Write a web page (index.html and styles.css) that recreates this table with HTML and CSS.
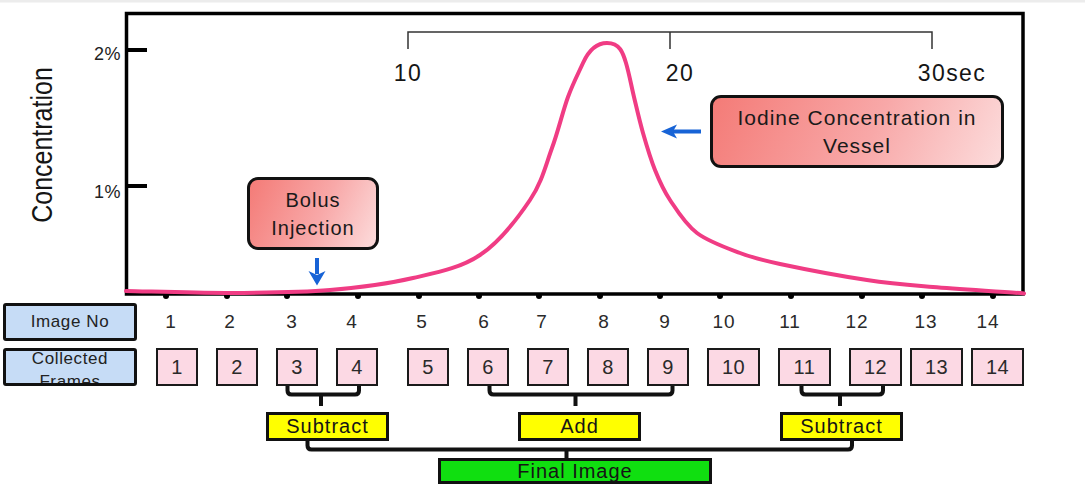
FILE: index.html
```html
<!DOCTYPE html>
<html lang="en">
<head>
<meta charset="utf-8">
<title>Contrast bolus timing</title>
<link rel="stylesheet" href="styles.css">
</head>
<body>
<div class="page">
  <div class="chart">
    <svg class="plot" width="1085" height="303" viewBox="0 0 1085 303">
      <rect class="topband" x="0" y="0" width="1085" height="2.5"/>
      <path class="timebar" d="M408,49 V32 H932 V49 M670,32 V49"/>
      <rect class="frame-box" x="126.5" y="13.5" width="896.5" height="280.5"/>
      <path class="ytickline" d="M128,50 H147 M128,186 H147"/>
      <g class="dots">
        <circle cx="166" cy="296" r="3"/>
        <circle cx="227" cy="296" r="3"/>
        <circle cx="287" cy="296" r="3"/>
        <circle cx="358" cy="296" r="3"/>
        <circle cx="419" cy="296" r="3"/>
        <circle cx="479" cy="296" r="3"/>
        <circle cx="539" cy="296" r="3"/>
        <circle cx="600" cy="296" r="3"/>
        <circle cx="660" cy="296" r="3"/>
        <circle cx="720" cy="296" r="3"/>
        <circle cx="791" cy="296" r="3"/>
        <circle cx="862" cy="296" r="3"/>
        <circle cx="922" cy="296" r="3"/>
        <circle cx="993" cy="296" r="3"/>
      </g>
      <path class="curve" d="M126,291 C145,291.3 196.3,293.2 230,293 C263.7,292.8 299.5,292.5 330,290 C360.5,287.5 388,283.8 413,278 C438,272.2 460.5,268 480,255 C499.5,242 518,217.8 530,200 C542,182.2 545.7,165.2 552,148 C558.3,130.8 562.8,111.2 568,97 C573.2,82.8 578.5,73 583,63 C588,52 595,43 607,43 C620,43 623,53 626,63 C629,73 631.2,85.3 634,97 C636.8,108.7 639.5,120.8 643,133 C646.5,145.2 650.5,158.8 655,170 C659.5,181.2 663,189.5 670,200 C677,210.5 685.3,224.2 697,233 C708.7,241.8 726.2,247.8 740,253 C753.8,258.2 758.8,259.5 780,264 C801.2,268.5 841.5,276.2 867,280 C892.5,283.8 907.2,284.8 933,287 C958.8,289.2 1007.2,292 1024,293.5"/>
      <path class="arrow-shaft" d="M672,131.5 H701 M317,258 V274"/>
      <path class="arrow-head" d="M661,131.5 L677,124.5 L673,131.5 L677,138.5 Z M308.5,271 L317,285.5 L325.5,271 L317,275 Z"/>
    </svg>
    <div class="ylabel">Concentration</div>
    <div class="ytick p2">2%</div>
    <div class="ytick p1">1%</div>
    <div class="xtime x10">10</div>
    <div class="xtime x20">20</div>
    <div class="xtime x30">30sec</div>
    <div class="callout bolus">Bolus<br>Injection</div>
    <div class="callout iodine">Iodine Concentration in<br>Vessel</div>
  </div>

  <div class="row">
    <div class="label">Image No</div>
    <div class="nums">
      <span>1</span><span>2</span><span>3</span><span>4</span><span>5</span><span>6</span><span>7</span>
      <span>8</span><span>9</span><span>10</span><span>11</span><span>12</span><span>13</span><span>14</span>
    </div>
  </div>

  <div class="row row-frames">
    <div class="label two-line">Collected<br>Frames</div>
    <div class="frames">
      <div class="frame">1</div>
      <div class="frame">2</div>
      <div class="frame">3</div>
      <div class="frame">4</div>
      <div class="frame skip">5</div>
      <div class="frame">6</div>
      <div class="frame">7</div>
      <div class="frame">8</div>
      <div class="frame">9</div>
      <div class="frame wide">10</div>
      <div class="frame wide">11</div>
      <div class="frame wide">12</div>
      <div class="frame wide near">13</div>
      <div class="frame wide near">14</div>
    </div>
  </div>

  <svg class="links links-a" width="1085" height="26" viewBox="0 0 1085 26">
    <path d="M287.5,0 V4.5 Q287.5,8.5 291.5,8.5 H355 Q359,8.5 359,4.5 V0 M321,8.5 V20"/>
    <path d="M489.5,0 V4.5 Q489.5,8.5 493.5,8.5 H668.5 Q672.5,8.5 672.5,4.5 V0 M575.5,8.5 V20"/>
    <path d="M801.5,0 V4.5 Q801.5,8.5 805.5,8.5 H879 Q883,8.5 883,4.5 V0 M840,8.5 V20"/>
  </svg>

  <div class="ops">
    <div class="op">Subtract</div>
    <div class="op add">Add</div>
    <div class="op sub2">Subtract</div>
  </div>

  <svg class="links links-b" width="1085" height="17" viewBox="0 0 1085 17">
    <path d="M307.5,0 V4.5 Q307.5,8.5 311.5,8.5 H848 Q852,8.5 852,4.5 V0 M566.5,8.5 V17"/>
  </svg>

  <div class="final-row">
    <div class="final">Final Image</div>
  </div>
</div>
</body>
</html>
```

FILE: styles.css
```css
html, body {
  margin: 0;
  padding: 0;
  background: #ffffff;
}

body {
  width: 1085px;
  height: 487px;
  overflow: hidden;
  font-family: "Liberation Sans", Arial, sans-serif;
  color: #1c1c1c;
}

/* ---------- chart ---------- */
.chart {
  position: relative;
  height: 303px;
}

.plot {
  display: block;
}

.topband {
  fill: #ececec;
}

.timebar {
  fill: none;
  stroke: #333333;
  stroke-width: 1.5;
}

.frame-box {
  fill: none;
  stroke: #000000;
  stroke-width: 3.5;
}

.ytickline {
  fill: none;
  stroke: #000000;
  stroke-width: 4;
}

.dots circle {
  fill: #000000;
}

.curve {
  fill: none;
  stroke: #f03c84;
  stroke-width: 4;
  stroke-linecap: round;
}

.arrow-shaft {
  fill: none;
  stroke: #1763d6;
  stroke-width: 4;
}

.arrow-head {
  fill: #1763d6;
}

.ylabel {
  position: absolute;
  left: 42px;
  top: 145px;
  font-size: 25px;
  line-height: 30px;
  white-space: nowrap;
  color: #151515;
  transform: translate(-50%, -50%) rotate(-90deg) scaleY(1.15);
}

.ytick {
  position: absolute;
  left: 80px;
  width: 41px;
  text-align: right;
  font-size: 18px;
  line-height: 20px;
  letter-spacing: 0.5px;
  color: #222222;
}

.ytick.p2 { top: 44px; }
.ytick.p1 { top: 182px; }

.xtime {
  position: absolute;
  top: 61px;
  width: 100px;
  margin-left: -50px;
  text-align: center;
  font-size: 23px;
  line-height: 24px;
  letter-spacing: 1.4px;
  color: #151515;
}

.xtime.x10 { left: 408px; }
.xtime.x20 { left: 680px; }
.xtime.x30 { left: 952px; }

.callout {
  position: absolute;
  box-sizing: border-box;
  border: 3px solid #111111;
  border-radius: 11px;
  background: linear-gradient(115deg, #f47b77 0%, #f8a8a8 55%, #fcdcdc 100%);
  display: flex;
  align-items: center;
  justify-content: center;
  text-align: center;
  font-size: 21px;
  line-height: 28px;
  letter-spacing: 1px;
  color: #1a1a1a;
}

.callout.bolus {
  left: 247px;
  top: 177px;
  width: 132px;
  height: 73px;
  font-size: 20px;
}

.callout.iodine {
  left: 710px;
  top: 95px;
  width: 294px;
  height: 73px;
}

/* ---------- rows ---------- */
.row {
  display: flex;
  align-items: center;
  padding-left: 3px;
  height: 38px;
}

.row-frames {
  margin-top: 7px;
}

.label {
  box-sizing: border-box;
  flex: none;
  width: 134px;
  height: 38px;
  border: 3px solid #111111;
  border-radius: 3px;
  background: #c6dcf6;
  display: flex;
  align-items: center;
  justify-content: center;
  text-align: center;
  overflow: hidden;
  font-size: 17px;
  line-height: 22px;
  letter-spacing: 0.6px;
  color: #222222;
}

.label.two-line {
  padding-top: 6px;
  line-height: 23px;
}

.nums {
  display: grid;
  grid-template-columns: 42px 76px 48px 72px 68px 56px 60px 64px 58px 60px 72px 62px 76px 48px;
  margin-left: 13px;
  text-align: center;
  font-size: 19px;
  letter-spacing: 1px;
  color: #2a2a2a;
}

.frames {
  display: flex;
  gap: 18px;
  margin-left: 19px;
}

.frame {
  box-sizing: border-box;
  flex: none;
  width: 42px;
  height: 38px;
  border: 2.5px solid #1a1a1a;
  background: #fcd9e4;
  display: flex;
  align-items: center;
  justify-content: center;
  font-size: 20px;
  letter-spacing: 0.5px;
  color: #2a2a2a;
}

.frame.wide { width: 53px; }
.frame.skip { margin-left: 11px; }
.frame.near { margin-left: -10px; }

.links {
  display: block;
}

.links path {
  fill: none;
  stroke: #111111;
  stroke-width: 4;
}

.ops {
  display: flex;
  padding-left: 266px;
  height: 29px;
}

.op {
  box-sizing: border-box;
  width: 123px;
  height: 29px;
  border: 3px solid #111111;
  background: #ffff00;
  display: flex;
  align-items: center;
  justify-content: center;
  font-size: 20px;
  letter-spacing: 1px;
  color: #151515;
}

.op.add { margin-left: 129px; }
.op.sub2 { margin-left: 139px; }

.final-row {
  padding-left: 438px;
}

.final {
  box-sizing: border-box;
  width: 274px;
  height: 26px;
  border: 3px solid #111111;
  background: #10df10;
  display: flex;
  align-items: center;
  justify-content: center;
  font-size: 20px;
  letter-spacing: 1px;
  color: #151515;
}
```
